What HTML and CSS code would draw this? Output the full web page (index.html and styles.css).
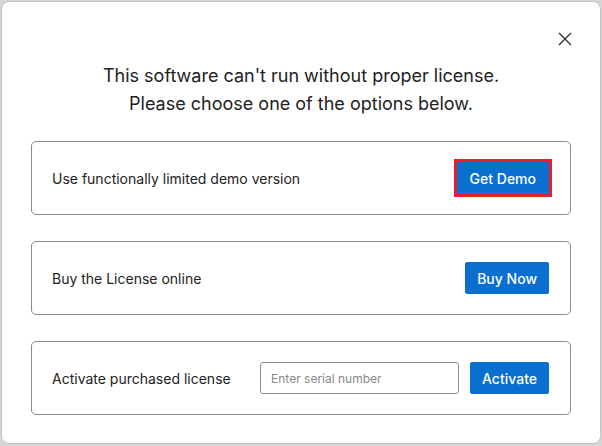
FILE: index.html
```html
<!DOCTYPE html>
<html lang="en">
<head>
    <meta charset="utf-8">
    <link rel="stylesheet" href="styles.css">
</head>
<body>
    <div class="dialog">
        <div class="dialog-top">
            <button class="close-button" aria-label="Close">
                <svg width="14" height="14" viewBox="0 0 14 14">
                    <path d="M1 1 L13 13 M13 1 L1 13" stroke="#333" stroke-width="1.4" fill="none"/>
                </svg>
            </button>
        </div>
        <p class="dialog-title">This software can't run without proper license.<br>Please choose one of the options below.</p>
        <div class="option-list">
            <div class="option-card">
                <span class="option-text">Use functionally limited demo version</span>
                <button class="primary-button focused">Get Demo</button>
            </div>
            <div class="option-card">
                <span class="option-text">Buy the License online</span>
                <button class="primary-button">Buy Now</button>
            </div>
            <div class="option-card">
                <span class="option-text">Activate purchased license</span>
                <div class="activate-group">
                    <input class="serial-input" type="text" placeholder="Enter serial number">
                    <button class="primary-button">Activate</button>
                </div>
            </div>
        </div>
    </div>
</body>
</html>
```

FILE: styles.css
```css
html, body {
    margin: 0;
    padding: 0;
}

body {
    font-family: 'Inter', 'Noto Sans', sans-serif;
    background-color: #d6d6d6;
    width: 602px;
    height: 446px;
    box-sizing: border-box;
    padding: 1px 1px 2px 1px;
}

.dialog {
    background-color: #fff;
    border: 1px solid #c4c4c4;
    border-radius: 8px;
    height: 100%;
    box-sizing: border-box;
    padding: 0 29px 0 29px;
}

.dialog-top {
    display: flex;
    justify-content: flex-end;
    padding-top: 25px;
    margin-right: -6px;
}

.close-button {
    width: 24px;
    height: 24px;
    padding: 0;
    border: none;
    background: none;
    display: flex;
    align-items: center;
    justify-content: center;
    cursor: pointer;
}

.dialog-title {
    margin: 11px 0 23px 0;
    text-align: center;
    font-size: 18px;
    line-height: 28px;
    color: #222;
}

.option-list {
    display: flex;
    flex-direction: column;
    gap: 26px;
}

.option-card {
    display: flex;
    align-items: center;
    justify-content: space-between;
    height: 74px;
    box-sizing: border-box;
    border: 1px solid #8c8c8c;
    border-radius: 5px;
    padding: 0 21px 0 20px;
}

.option-text {
    font-size: 14px;
    color: #222;
}

.primary-button {
    font-family: 'Inter', 'Noto Sans', sans-serif;
    font-size: 14px;
    font-weight: 500;
    color: #fff;
    background-color: #0a6fce;
    border: 1px solid #0a6fce;
    border-radius: 2px;
    height: 32px;
    padding: 0 11px;
    cursor: pointer;
}

.primary-button.focused {
    outline: 3px solid #e5202e;
    outline-offset: 0;
    border-radius: 0;
    padding: 0 12px;
}

.activate-group {
    display: flex;
    align-items: center;
    gap: 11px;
}

.serial-input {
    width: 199px;
    height: 32px;
    box-sizing: border-box;
    border: 1px solid #8c8c8c;
    border-radius: 3px;
    padding: 0 10px;
    font-family: 'Inter', 'Noto Sans', sans-serif;
    font-size: 12px;
    color: #222;
}

.serial-input::placeholder {
    color: #8a8a8a;
}
```
